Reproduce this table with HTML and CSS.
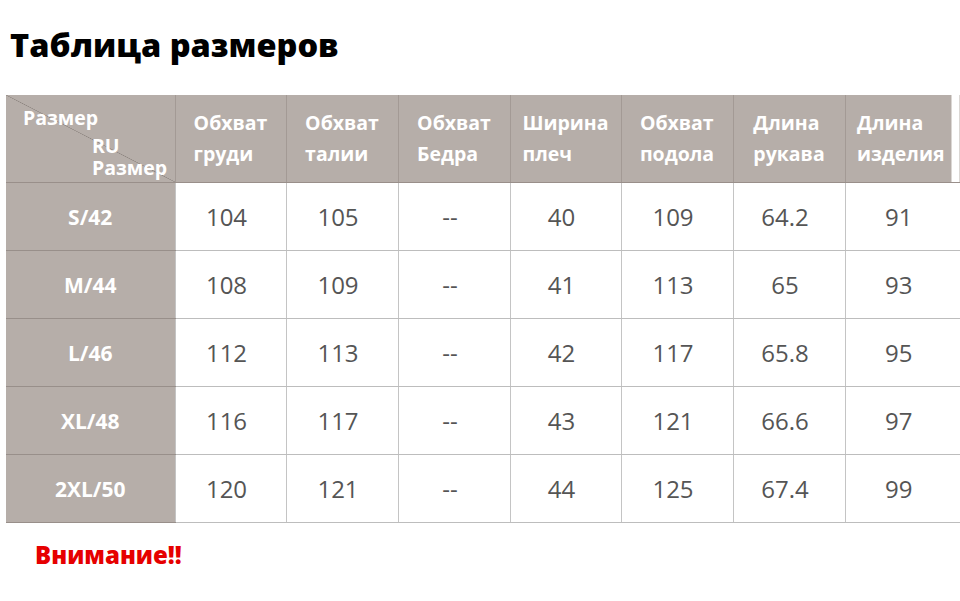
FILE: index.html
```html
<!DOCTYPE html>
<html lang="ru">
<head>
<meta charset="utf-8">
<title>Таблица размеров</title>
<link rel="stylesheet" href="styles.css">
</head>
<body>
<h1 class="title">Таблица размеров</h1>
<table class="sizes">
  <colgroup>
    <col class="c-first"><col class="c1"><col class="c2"><col class="c3"><col class="c4"><col class="c5"><col class="c6"><col class="c7">
  </colgroup>
  <thead>
    <tr>
      <th class="corner">
        <span class="corner-top">Размер</span>
        <span class="corner-bottom">RU<br>Размер</span>
      </th>
      <th><span class="hd">Обхват<br>груди</span></th>
      <th><span class="hd">Обхват<br>талии</span></th>
      <th><span class="hd">Обхват<br>Бедра</span></th>
      <th><span class="hd">Ширина<br>плеч</span></th>
      <th><span class="hd">Обхват<br>подола</span></th>
      <th><span class="hd">Длина<br>рукава</span></th>
      <th class="last"><span class="hd">Длина<br>изделия</span></th>
    </tr>
  </thead>
  <tbody>
    <tr><th>S/42</th><td>104</td><td>105</td><td>--</td><td>40</td><td>109</td><td>64.2</td><td>91</td></tr>
    <tr><th>M/44</th><td>108</td><td>109</td><td>--</td><td>41</td><td>113</td><td>65</td><td>93</td></tr>
    <tr><th>L/46</th><td>112</td><td>113</td><td>--</td><td>42</td><td>117</td><td>65.8</td><td>95</td></tr>
    <tr><th>XL/48</th><td>116</td><td>117</td><td>--</td><td>43</td><td>121</td><td>66.6</td><td>97</td></tr>
    <tr><th>2XL/50</th><td>120</td><td>121</td><td>--</td><td>44</td><td>125</td><td>67.4</td><td>99</td></tr>
  </tbody>
</table>
<p class="warn">Внимание!!</p>
</body>
</html>
```
FILE: styles.css
```css
* { box-sizing: border-box; }
html, body { margin: 0; padding: 0; background: #fff; }
body {
  font-family: "Open Sans", "Noto Sans", sans-serif;
  width: 960px;
  height: 601px;
  overflow: hidden;
}
.title {
  margin: 0;
  padding: 21px 0 0 10px;
  height: 95px;
  font-size: 32.5px;
  font-weight: 800;
  color: #000;
  line-height: 48px;
}
.sizes {
  margin-left: 6px;
  width: 954px;
  border-collapse: collapse;
  table-layout: fixed;
}
.c-first { width: 169px; }
.c1 { width: 111px; }
.c2 { width: 112px; }
.c3 { width: 112px; }
.c4 { width: 111px; }
.c5 { width: 112px; }
.c6 { width: 112px; }
.c7 { width: 115px; }

.sizes thead th {
  height: 87px;
  background: #b6aea9;
  color: #fff;
  font-weight: 700;
  font-size: 19.5px;
  line-height: 31px;
  text-align: center;
  vertical-align: middle;
  padding: 0;
  border-left: 1px solid #a39a95;
  border-bottom: 1px solid #998f8a;
}
.sizes thead th:first-child { border-left: none; }
.sizes thead th.last {
  padding-right: 4px;
  background: linear-gradient(to right, #b6aea9 calc(100% - 8px), #fff calc(100% - 8px));
}
.hd {
  display: inline-block;
  text-align: left;
}
.sizes thead th.corner {
  position: relative;
  text-align: left;
  vertical-align: top;
  font-size: 19.5px;
  line-height: 22px;
  background:
    linear-gradient(to top right, transparent calc(50% - 0.6px), #8e8681 50%, transparent calc(50% + 0.6px)),
    #b6aea9;
}
.corner-top {
  position: absolute;
  left: 17px;
  top: 12px;
}
.corner-bottom {
  position: absolute;
  left: 86px;
  top: 40px;
}
.sizes tbody tr { height: 68px; }
.sizes tbody th {
  background: #b6aea9;
  color: #fff;
  font-weight: 700;
  font-size: 21px;
  text-align: center;
  vertical-align: middle;
  padding: 2px 0 0;
  border-bottom: 1px solid #988f8a;
}
.sizes tbody td {
  color: #555;
  font-size: 24px;
  font-weight: 400;
  text-align: center;
  vertical-align: middle;
  padding: 0 8px 0 0;
  border-left: 1px solid #c4c4c4;
  border-bottom: 1px solid #bdbdbd;
}
.warn {
  margin: 16px 0 0 35px;
  color: #e60000;
  font-weight: 800;
  font-size: 24px;
  line-height: 32px;
}
```
